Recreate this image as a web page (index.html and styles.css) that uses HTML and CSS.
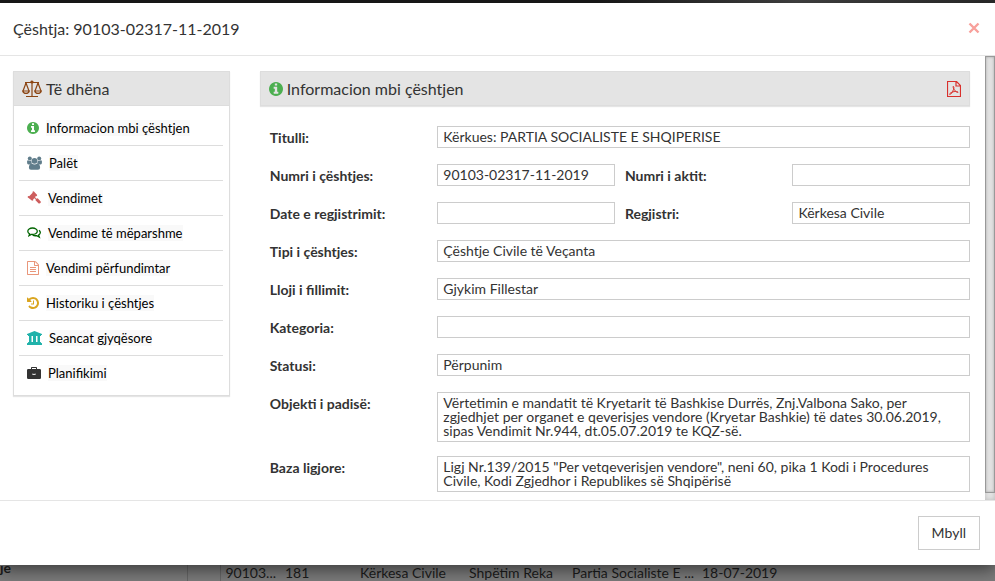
FILE: index.html
```html
<!DOCTYPE html>
<html lang="sq">
<head>
    <meta charset="UTF-8">
    <meta name="viewport" content="width=device-width, initial-scale=1.0">
    <title>Çështja: 90103-02317-11-2019</title>
    <link rel="stylesheet" href="styles.css">
</head>
<body>
    <div class="topbar"></div>

    <div class="modal" role="dialog" aria-labelledby="modalTitle">
        <div class="modal-header">
            <h4 class="modal-title" id="modalTitle">Çështja: 90103-02317-11-2019</h4>
            <button class="close" type="button" aria-label="Mbyll dritaren">
                <svg width="12" height="12" viewBox="0 0 12 12"><path d="M1.500 1.500l9 9M10.500 1.500l-9 9" stroke="currentColor" stroke-width="2.400"/></svg>
            </button>
        </div>

        <div class="modal-body">
            <div class="content">
                <div class="sidebar">
                    <div class="panel-header">
                        <svg class="icon-scale" width="20" height="18" viewBox="0 0 20 18" fill="none" stroke="currentColor" stroke-width="1.2">
                            <path d="M3 2.5h14M10 1v15M4 16.5h12M4 3L1 11M4 3l3 8M16 3l-3 8M16 3l3 8"/>
                            <path d="M.7 11h6.600q-.7 2.400-3.300 2.400T.7 11zM12.700 11h6.600q-.7 2.400-3.300 2.400T12.700 11z"/>
                            <circle cx="10" cy="2" r="1" fill="currentColor"/>
                        </svg>
                        <span>Të dhëna</span>
                    </div>
                    <ul class="menu">
                        <li class="menu-item">
                            <a href="#info">
                                <svg class="green" width="12" height="12" viewBox="128 128 1536 1536" fill="currentColor"><path d="M1152 1376v-160q0-14-9-23t-23-9h-96v-512q0-14-9-23t-23-9h-320q-14 0-23 9t-9 23v160q0 14 9 23t23 9h96v320h-96q-14 0-23 9t-9 23v160q0 14 9 23t23 9h448q14 0 23-9t9-23zm-128-896v-160q0-14-9-23t-23-9h-192q-14 0-23 9t-9 23v160q0 14 9 23t23 9h192q14 0 23-9t9-23zm640 416q0 209-103 385.500t-279.500 279.500-385.500 103-385.500-103-279.500-279.500-103-385.500 103-385.500 279.500-279.500 385.500-103 385.500 103 279.500 279.500 103 385.500z"/></svg>
                                <span>Informacion mbi çështjen</span>
                            </a>
                        </li>
                        <li class="menu-item">
                            <a href="#palet">
                                <svg class="slate" width="15" height="14" viewBox="0 0 15 14" fill="currentColor">
                                    <circle cx="2.800" cy="2.600" r="2"/>
                                    <circle cx="12.200" cy="2.600" r="2"/>
                                    <path d="M0 6q0-2 1.200-1.700 1.600 1 3 .3Q4.200 6.300 5 7.500q-1.200 0-2.200 1H1.500Q0 8.500 0 6zM15 6q0-2-1.200-1.700-1.600 1-3 .3 0 1.700-.8 2.900 1.200 0 2.200 1h1.300Q15 8.500 15 6z"/>
                                    <circle cx="7.500" cy="4.800" r="2.900"/>
                                    <path d="M4.800 7.500q2.700 1.800 5.400 0 2.900.2 2.900 4.200 0 2-2.100 2H4q-2.100 0-2.100-2 0-4 2.900-4.200z"/>
                                </svg>
                                <span>Palët</span>
                            </a>
                        </li>
                        <li class="menu-item">
                            <a href="#vendimet">
                                <svg class="red" width="14" height="14" viewBox="0 0 14 14" fill="currentColor">
                                    <path d="M5.500.7l1.200-.4L10.200 4l-.5 1.200-1-.1L8.200 6.500l1.300 1.200 1.200-.4 3 3.100q.4 1-.3 1.700t-1.700.3L8.500 9.300l.2-1L7.500 7.200 6.200 8.300l.1 1-1.200.4L.6 6.300 1 5.100l1.200.1 3.400-3.400z"/>
                                </svg>
                                <span>Vendimet</span>
                            </a>
                        </li>
                        <li class="menu-item">
                            <a href="#meparshme">
                                <svg class="darkgreen" width="14" height="12" viewBox="0 0 14 12" fill="none" stroke="currentColor" stroke-width="1.300">
                                    <path d="M5.500 1C2.800 1 .8 2.400.8 4.300c0 1.100.7 2 1.800 2.600L2 8.600l2.400-1.200c3.300.4 5.900-1.100 5.900-3.100C10.300 2.400 8.200 1 5.500 1z"/>
                                    <path d="M12 3.200c2 1.600 1.600 3.700-.4 4.900l.7 1.900-2.500-1.400c-1.600.3-3 .1-4.200-.5"/>
                                </svg>
                                <span>Vendime të mëparshme</span>
                            </a>
                        </li>
                        <li class="menu-item">
                            <a href="#perfundimtar">
                                <svg class="salmon" width="12" height="14" viewBox="128 0 1536 1792" fill="currentColor"><path d="M1596 380q28 28 48 76t20 88v1152q0 40-28 68t-68 28h-1344q-40 0-68-28t-28-68v-1600q0-40 28-68t68-28h896q40 0 88 20t76 48zm-444-244v376h376q-10-29-22-41l-313-313q-12-12-41-22zm384 1528v-1024h-416q-40 0-68-28t-28-68v-416h-768v1536h1280zm-1024-864q0-14 9-23t23-9h704q14 0 23 9t9 23v64q0 14-9 23t-23 9h-704q-14 0-23-9t-9-23v-64zm736 224q14 0 23 9t9 23v64q0 14-9 23t-23 9h-704q-14 0-23-9t-9-23v-64q0-14 9-23t23-9h704zm0 256q14 0 23 9t9 23v64q0 14-9 23t-23 9h-704q-14 0-23-9t-9-23v-64q0-14 9-23t23-9h704z"/></svg>
                                <span>Vendimi përfundimtar</span>
                            </a>
                        </li>
                        <li class="menu-item">
                            <a href="#historiku">
                                <svg class="gold" width="12" height="12" viewBox="128 128 1536 1536" fill="currentColor"><path d="M1664 896q0 156-61 298t-164 245-245 164-298 61q-172 0-327-72.500t-264-204.500q-7-10-6.500-22.500t8.500-20.500l137-138q10-9 25-9 16 2 23 12 73 95 179 147t225 52q104 0 198.500-40.500t163.500-109.500 109.500-163.500 40.500-198.500-40.500-198.500-109.500-163.500-163.500-109.500-198.500-40.500q-98 0-188 35.500t-160 101.500l137 138q31 30 14 69-17 40-59 40h-448q-26 0-45-19t-19-45v-448q0-42 40-59 39-17 69 14l130 129q107-101 244.500-156.500t284.500-55.500q156 0 298 61t245 164 164 245 61 298zm-640-288v448q0 14-9 23t-23 9h-320q-14 0-23-9t-9-23v-64q0-14 9-23t23-9h224v-352q0-14 9-23t23-9h64q14 0 23 9t9 23z"/></svg>
                                <span>Historiku i çështjes</span>
                            </a>
                        </li>
                        <li class="menu-item">
                            <a href="#seancat">
                                <svg class="teal" width="15" height="14" viewBox="0 0 15 14" fill="currentColor">
                                    <path d="M7.500 0L15 3v1h-1v1H1V4H0V3zM2 4.500h2.500V11H6V4.500h3V11h1.500V4.500H13V11h.5q.5 0 .5.5v1H1v-1q0-.5.5-.5H2zM.5 12h14q.5 0 .5.5V14H0v-1.500q0-.5.5-.5z"/>
                                </svg>
                                <span>Seancat gjyqësore</span>
                            </a>
                        </li>
                        <li class="menu-item">
                            <a href="#planifikimi">
                                <svg class="dark" width="14" height="12" viewBox="0 0 14 12" fill="currentColor" fill-rule="evenodd">
                                    <path d="M4 2V.8Q4 0 4.800 0h4.400Q10 0 10 .8V2h2.800Q14 2 14 3.200v7.600q0 1.200-1.200 1.200H1.200Q0 12 0 10.800V3.200Q0 2 1.200 2zM5 1v1h4V1zM5.500 6.500V8h3V6.500h-.8v.8H6.300v-.8z"/>
                                </svg>
                                <span>Planifikimi</span>
                            </a>
                        </li>
                    </ul>
                </div>

                <div class="main">
                    <div class="panel-header main-header">
                        <svg class="green" width="14" height="14" viewBox="128 128 1536 1536" fill="currentColor"><path d="M1152 1376v-160q0-14-9-23t-23-9h-96v-512q0-14-9-23t-23-9h-320q-14 0-23 9t-9 23v160q0 14 9 23t23 9h96v320h-96q-14 0-23 9t-9 23v160q0 14 9 23t23 9h448q14 0 23-9t9-23zm-128-896v-160q0-14-9-23t-23-9h-192q-14 0-23 9t-9 23v160q0 14 9 23t23 9h192q14 0 23-9t9-23zm640 416q0 209-103 385.500t-279.500 279.500-385.500 103-385.500-103-279.500-279.500-103-385.500 103-385.500 279.500-279.500 385.500-103 385.500 103 279.500 279.500 103 385.500z"/></svg>
                        <span>Informacion mbi çështjen</span>
                        <a class="pdf" href="#pdf" aria-label="PDF">
                            <svg width="14" height="16" viewBox="0 0 14 16" fill="none" stroke="currentColor">
                                <path d="M.5.5h9l4 4v11H.5zM9 .5V5h4.500" stroke-width="1.200"/>
                                <path d="M6 5.500c1.200-.3 1 1.600.5 3C5.600 11 4 13.500 2.700 13.500c-.8-.9 2.300-2.900 5.500-3 2.500-.1 3.500.5 2.700 1-1.200.3-4.400-2.700-4.900-6z"/>
                            </svg>
                        </a>
                    </div>

                    <div class="form">
                        <label class="label" for="titulli">Titulli:</label>
                        <input class="field wide" type="text" id="titulli" value="Kërkues: PARTIA SOCIALISTE E SHQIPERISE" readonly>

                        <label class="label" for="numri">Numri i çështjes:</label>
                        <input class="field" type="text" id="numri" value="90103-02317-11-2019" readonly>
                        <label class="label" for="akti">Numri i aktit:</label>
                        <input class="field" type="text" id="akti" readonly>

                        <label class="label" for="data">Date e regjistrimit:</label>
                        <input class="field" type="text" id="data" readonly>
                        <label class="label" for="regjistri">Regjistri:</label>
                        <input class="field" type="text" id="regjistri" value="Kërkesa Civile" readonly>

                        <label class="label" for="tipi">Tipi i çështjes:</label>
                        <input class="field wide" type="text" id="tipi" value="Çështje Civile të Veçanta" readonly>

                        <label class="label" for="lloji">Lloji i fillimit:</label>
                        <input class="field wide" type="text" id="lloji" value="Gjykim Fillestar" readonly>

                        <label class="label" for="kategoria">Kategoria:</label>
                        <input class="field wide" type="text" id="kategoria" readonly>

                        <label class="label" for="statusi">Statusi:</label>
                        <input class="field wide" type="text" id="statusi" value="Përpunim" readonly>

                        <label class="label" for="objekti">Objekti i padisë:</label>
                        <textarea class="field wide" id="objekti" rows="3" readonly>Vërtetimin e mandatit të Kryetarit të Bashkise Durrës, Znj.Valbona Sako, per
zgjedhjet per organet e qeverisjes vendore (Kryetar Bashkie) të dates 30.06.2019,
sipas Vendimit Nr.944, dt.05.07.2019 te KQZ-së.</textarea>

                        <label class="label" for="baza">Baza ligjore:</label>
                        <textarea class="field wide" id="baza" rows="2" readonly>Ligj Nr.139/2015 "Per vetqeverisjen vendore", neni 60, pika 1 Kodi i Procedures
Civile, Kodi Zgjedhor i Republikes së Shqipërisë</textarea>
                    </div>
                </div>
            </div>
            <div class="scrollbar"><div class="scroll-thumb"></div></div>
        </div>

        <div class="modal-footer">
            <button class="button" type="button">Mbyll</button>
        </div>
    </div>

    <div class="backdrop">
        <table class="cases">
            <tr>
                <th class="col-menu">je</th>
                <td class="col-gap"></td>
                <td class="col-no">90103...</td>
                <td class="col-id">181</td>
                <td class="col-type">Kërkesa Civile</td>
                <td class="col-judge">Shpëtim Reka</td>
                <td class="col-party">Partia Socialiste E ...</td>
                <td>18-07-2019</td>
            </tr>
        </table>
    </div>
</body>
</html>
```
FILE: styles.css
```css
* {
    box-sizing: border-box;
}

body {
    font-family: Lato, "Liberation Sans", sans-serif;
    font-size: 14px;
    margin: 0;
    color: #333;
    background-color: #7b7b7b;
    display: flex;
    flex-direction: column;
    min-height: 100vh;
}

.topbar {
    height: 3px;
    background: linear-gradient(to right, #1a1a1a 0%, #1a1a1a 60%, #444 80%, #2b2b2b 100%);
}

.modal {
    flex: 1;
    display: flex;
    flex-direction: column;
    position: relative;
    background-color: #fff;
    box-shadow: 0 5px 15px rgba(0, 0, 0, 0.5);
}

.modal-header {
    display: flex;
    justify-content: space-between;
    align-items: center;
    height: 53px;
    padding: 0 15px 2px 13px;
    border-bottom: 1px solid #e5e5e5;
}

.modal-title {
    margin: 0;
    font-size: 16px;
    font-weight: normal;
}

.close {
    display: flex;
    padding: 0;
    border: none;
    background: none;
    color: #f8a09b;
    cursor: pointer;
}

.modal-body {
    flex: 1;
    display: flex;
}

.content {
    flex: 1;
    display: grid;
    grid-template-columns: repeat(12, 1fr);
    column-gap: 30px;
    align-items: start;
    padding: 15px 15px 8px 13px;
}

.scrollbar {
    width: 10px;
    padding-bottom: 7px;
    background-color: #e4e4e4;
    box-shadow: inset 0 0 5px #bbb;
}

.scroll-thumb {
    height: 100%;
    border: 1px solid #999;
    background-color: #e1e1e1;
    box-shadow: inset 0 0 3px #aaa;
}

.sidebar {
    grid-column: span 3;
    border: 1px solid #ddd;
    box-shadow: 0 1px 1px rgba(0, 0, 0, 0.1);
}

.main {
    grid-column: span 9;
}

.panel-header {
    display: flex;
    align-items: center;
    gap: 4px;
    height: 34px;
    padding: 0 8px;
    font-size: 16px;
    background-color: #e4e4e4;
    border-bottom: 1px solid #ddd;
}

.main-header {
    height: 35px;
    border: 1px solid #ddd;
    box-shadow: 0 1px 1px rgba(0, 0, 0, 0.1);
}

.icon-scale {
    color: #8b4513;
}

.pdf {
    display: flex;
    margin-left: auto;
    color: #d9302c;
}

.menu {
    list-style: none;
    margin: 0;
    padding: 5px 6px 5px 5px;
}

.menu-item {
    height: 35px;
    border-bottom: 1px solid #ddd;
}

.menu-item:last-child {
    height: 34px;
    border-bottom: none;
}

.menu-item a {
    display: flex;
    align-items: center;
    gap: 7px;
    height: 100%;
    padding-left: 8px;
    color: #000;
    font-size: 13px;
    text-decoration: none;
}

.menu-item span {
    line-height: 16px;
    background-color: #f9f9f9;
}

.green { color: #4caf50; }
.slate { color: #607d8b; }
.red { color: #cd5c5c; }
.darkgreen { color: #006400; }
.salmon { color: #e9967a; }
.gold { color: #daa520; }
.teal { color: #20b2aa; }
.dark { color: #333; }

.form {
    display: grid;
    grid-template-columns: repeat(4, 1fr);
    grid-auto-rows: minmax(24px, auto);
    row-gap: 14px;
    align-items: start;
    padding-top: 20px;
}

.label {
    padding: 4px 0 0 10px;
    line-height: 16px;
    font-weight: bold;
}

.field {
    display: block;
    width: 100%;
    margin: 0;
    padding: 3px 5px;
    border: 1px solid #ccc;
    border-radius: 0;
    background-color: #fff;
    color: #333;
    font-family: inherit;
    font-size: 14px;
    line-height: 14px;
    outline: none;
    resize: none;
    overflow: hidden;
}

input.field {
    height: 22px;
    padding: 1px 5px 3px;
}

.wide {
    grid-column: span 3;
}

.modal-footer {
    display: flex;
    justify-content: flex-end;
    align-items: center;
    height: 65px;
    padding: 0 15px;
    border-top: 1px solid #e5e5e5;
}

.button {
    height: 34px;
    padding: 0 13px 2px;
    border: 1px solid #ccc;
    background-color: #fff;
    color: #333;
    font-family: inherit;
    font-size: 14px;
    cursor: pointer;
}

.backdrop {
    height: 16px;
    overflow: hidden;
}

.cases {
    width: 100%;
    table-layout: fixed;
    border-collapse: collapse;
    color: #1c1c1c;
}

.cases td {
    padding: 0 0 0 5px;
    line-height: 16px;
    white-space: nowrap;
}

.cases .col-menu {
    width: 187px;
    padding: 0;
    line-height: 6px;
    text-align: left;
    vertical-align: top;
}

.cases .col-gap {
    width: 33px;
    border-left: 1px solid #666;
    border-right: 1px solid #666;
}

.col-no { width: 60px; }
.col-id { width: 75px; }
.col-type { width: 109px; }
.col-judge { width: 103px; }
.col-party { width: 130px; }
```
